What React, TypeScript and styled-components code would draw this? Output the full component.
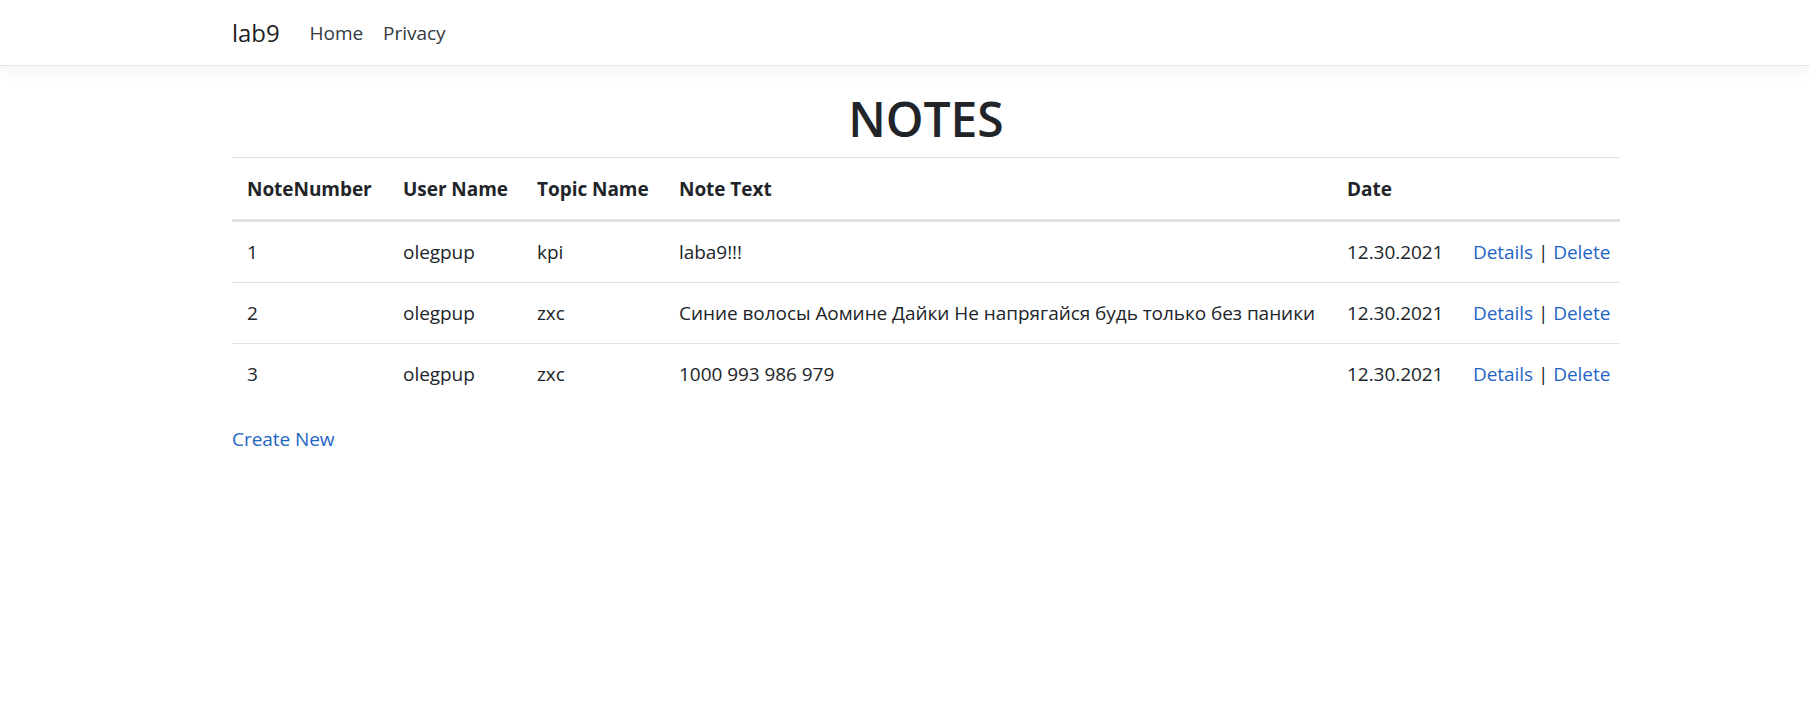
import styled, { createGlobalStyle } from 'styled-components';

interface INote {
    id: number;
    user: string;
    topic: string;
    text: string;
    date: string;
}

const notes: INote[] = [
    { id: 1, user: 'olegpup', topic: 'kpi', text: 'laba9!!!', date: '12.30.2021' },
    { id: 2, user: 'olegpup', topic: 'zxc', text: 'Синие волосы Аомине Дайки Не напрягайся будь только без паники', date: '12.30.2021' },
    { id: 3, user: 'olegpup', topic: 'zxc', text: '1000 993 986 979', date: '12.30.2021' },
];

const columns = [
    { title: 'NoteNumber', width: 156 },
    { title: 'User Name', width: 134 },
    { title: 'Topic Name', width: 142 },
    { title: 'Note Text', width: 668 },
    { title: 'Date', width: 126 },
    { title: '', width: 162 },
];

const GlobalStyle = createGlobalStyle`
    html, body {
        margin: 0;
        padding: 0;
        background: #fff;
    }
    body {
        font-family: "Open Sans", "Noto Sans", sans-serif;
        font-size: 19px;
        line-height: 30px;
        letter-spacing: -0.05px;
        color: #212529;
    }
    * {
        box-sizing: border-box;
    }
`

const StyledNavbar = styled.header`
    height: 66px;
    background: #fff;
    border-bottom: 1px solid #e5e5e5;
    box-shadow: 0 5px 15px rgba(0, 0, 0, 0.05);
    margin-bottom: 20px;
`

const StyledContainer = styled.div`
    width: 1418px;
    margin-left: 217px;
    padding: 0 15px;
`

const StyledNavInner = styled(StyledContainer)`
    display: flex;
    align-items: center;
    height: 100%;
`

const StyledBrand = styled.a`
    font-size: 24px;
    color: rgba(0, 0, 0, 0.9);
    text-decoration: none;
    margin-right: 20px;
    line-height: 36px;
`

const StyledNavLink = styled.a`
    padding: 0 10px;
    font-size: 19px;
    color: #343a40;
    text-decoration: none;
`

const StyledTitle = styled.h1`
    margin: 0 0 8px;
    padding-top: 3px;
    font-size: 48px;
    font-weight: 600;
    line-height: 60px;
    text-align: center;
`

const StyledTable = styled.table`
    width: 100%;
    border-collapse: collapse;
    table-layout: fixed;
    margin-bottom: 20px;
`

const StyledTh = styled.th<{ $width: number }>`
    width: ${p => p.$width}px;
    text-align: left;
    font-weight: 700;
    padding: 16px 15px 15px;
    border-top: 1px solid #dee2e6;
    border-bottom: 3px solid #dee2e6;
    vertical-align: bottom;
    white-space: nowrap;
`

const StyledTd = styled.td`
    padding: 15px;
    border-top: 1px solid #dee2e6;
    vertical-align: top;
    white-space: nowrap;
`

const StyledLink = styled.a`
    color: #1f65c4;
    text-decoration: none;
`

const StyledFooterLink = styled.p`
    margin: 0;
`

export default function App() {
    return (
        <>
            <GlobalStyle />
            <StyledNavbar>
                <StyledNavInner>
                    <StyledBrand href="#">lab9</StyledBrand>
                    <StyledNavLink href="#">Home</StyledNavLink>
                    <StyledNavLink href="#">Privacy</StyledNavLink>
                </StyledNavInner>
            </StyledNavbar>
            <StyledContainer>
                <StyledTitle>NOTES</StyledTitle>
                <StyledTable>
                    <thead>
                        <tr>
                            {columns.map(c => (
                                <StyledTh key={c.width} $width={c.width}>{c.title}</StyledTh>
                            ))}
                        </tr>
                    </thead>
                    <tbody>
                        {notes.map(n => (
                            <tr key={n.id}>
                                <StyledTd>{n.id}</StyledTd>
                                <StyledTd>{n.user}</StyledTd>
                                <StyledTd>{n.topic}</StyledTd>
                                <StyledTd>{n.text}</StyledTd>
                                <StyledTd>{n.date}</StyledTd>
                                <StyledTd>
                                    <StyledLink href="#">Details</StyledLink> | <StyledLink href="#">Delete</StyledLink>
                                </StyledTd>
                            </tr>
                        ))}
                    </tbody>
                </StyledTable>
                <StyledFooterLink>
                    <StyledLink href="#">Create New</StyledLink>
                </StyledFooterLink>
            </StyledContainer>
        </>
    )
}
